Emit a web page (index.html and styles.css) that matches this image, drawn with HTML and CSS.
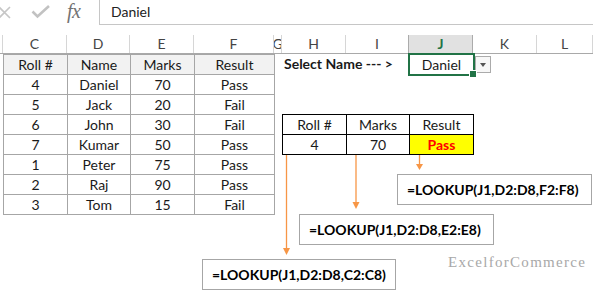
FILE: index.html
```html
<!DOCTYPE html>
<html>
<head>
<meta charset="utf-8">
<link rel="stylesheet" href="styles.css">
</head>
<body>
<div class="app">
  <div class="formula-bar">
    <div class="fb-icons">
      <svg class="ic-x" width="14" height="14" viewBox="0 0 14 14"><path d="M1 1 L12 12 M12 1 L1 12" stroke="#c6c6c6" stroke-width="1.6" fill="none"/></svg>
      <svg class="ic-check" width="20" height="14" viewBox="0 0 20 14"><path d="M1.5 6.5 L6.5 11.5 L18 1" stroke="#c2c2c2" stroke-width="2.6" fill="none"/></svg>
      <span class="ic-fx">fx</span>
    </div>
    <div class="fb-input">Daniel</div>
  </div>

  <div class="col-headers">
    <div class="ch ch-edge"></div>
    <div class="ch">C</div>
    <div class="ch">D</div>
    <div class="ch">E</div>
    <div class="ch">F</div>
    <div class="ch ch-g">G</div>
    <div class="ch">H</div>
    <div class="ch">I</div>
    <div class="ch ch-sel">J</div>
    <div class="ch ch-after-sel">K</div>
    <div class="ch">L</div>
  </div>

  <div class="sheet">
    <div class="data-table">
      <div class="cell head">Roll #</div><div class="cell head">Name</div><div class="cell head">Marks</div><div class="cell head">Result</div>
      <div class="cell">4</div><div class="cell">Daniel</div><div class="cell">70</div><div class="cell">Pass</div>
      <div class="cell">5</div><div class="cell">Jack</div><div class="cell">20</div><div class="cell">Fail</div>
      <div class="cell">6</div><div class="cell">John</div><div class="cell">30</div><div class="cell">Fail</div>
      <div class="cell">7</div><div class="cell">Kumar</div><div class="cell">50</div><div class="cell">Pass</div>
      <div class="cell">1</div><div class="cell">Peter</div><div class="cell">75</div><div class="cell">Pass</div>
      <div class="cell">2</div><div class="cell">Raj</div><div class="cell">90</div><div class="cell">Pass</div>
      <div class="cell">3</div><div class="cell">Tom</div><div class="cell">15</div><div class="cell">Fail</div>
    </div>

    <div class="select-label">Select Name --- &gt;</div>
    <div class="active-cell">Daniel</div>
    <div class="dropdown"><span class="tri"></span></div>

    <div class="lookup-table">
      <div class="lcell">Roll #</div><div class="lcell">Marks</div><div class="lcell">Result</div>
      <div class="lcell">4</div><div class="lcell">70</div><div class="lcell result">Pass</div>
    </div>

    <svg class="arrows" width="593" height="238" viewBox="0 0 593 238">
      <g stroke="#f79646" stroke-width="1.3" fill="none">
        <line x1="286.5" y1="101" x2="286.5" y2="196"/>
        <line x1="356" y1="101" x2="356" y2="150"/>
        <line x1="419.5" y1="101" x2="419.5" y2="111"/>
      </g>
      <g fill="#f79646">
        <polygon points="283,194 290,194 286.5,201"/>
        <polygon points="352.5,148 359.5,148 356,155"/>
        <polygon points="416,110 423,110 419.5,116"/>
      </g>
    </svg>

    <div class="formula-box fb3">=LOOKUP(J1,D2:D8,F2:F8)</div>
    <div class="formula-box fb2">=LOOKUP(J1,D2:D8,E2:E8)</div>
    <div class="formula-box fb1">=LOOKUP(J1,D2:D8,C2:C8)</div>

    <div class="watermark">ExcelforCommerce</div>
  </div>
</div>
</body>
</html>
```

FILE: styles.css
```css
* { box-sizing: border-box; }
html, body { margin: 0; padding: 0; background: #fff; }
body {
  width: 593px;
  height: 292px;
  overflow: hidden;
  font-family: Lato, "Noto Sans", sans-serif;
  font-size: 14px;
  color: #1a1a1a;
}
.app { width: 593px; }

/* formula bar */
.formula-bar {
  display: flex;
  height: 25px;
}
.fb-icons {
  width: 99px;
  display: flex;
  align-items: center;
  position: relative;
}
.ic-x { margin-left: -2px; margin-top: 0px; }
.ic-check { margin-left: 19px; margin-top: -1px; }
.ic-fx {
  margin-left: 16px;
  font-family: "Liberation Serif", serif;
  font-style: italic;
  font-size: 20px;
  color: #737373;
  letter-spacing: -0.5px;
  margin-top: -2px;
}
.fb-input {
  flex: 1;
  border-left: 1px solid #c6c6c6;
  border-bottom: 1px solid #c6c6c6;
  padding-left: 11px;
  line-height: 24px;
  font-size: 14px;
  color: #222;
}

/* column headers */
.col-headers {
  display: grid;
  grid-template-columns: 3px 64px 63px 64px 80px 8px 64px 63px 64px 64px 56px;
  margin-top: 10px;
  height: 19px;
  border-bottom: 1px solid #a9a9a9;
}
.ch {
  border-right: 1px solid #d6d6d6;
  text-align: center;
  line-height: 18px;
  font-size: 14px;
  color: #444;
  overflow: hidden;
  white-space: nowrap;
}
.ch-edge { border-right-color: #d6d6d6; }
.ch-g { display: flex; justify-content: center; }
.ch-sel {
  background: #e1e1e1;
  color: #217346;
  font-weight: bold;
  border-right-color: #ababab;
}
.ch:nth-child(8) { border-right-color: #ababab; }

/* sheet */
.sheet {
  position: relative;
  display: grid;
  grid-template-columns: 3px 64px 63px 64px 80px 8px 64px 63px 64px 64px 56px;
  grid-template-rows: repeat(8, 20px);
  height: 238px;
  align-content: start;
}
.data-table {
  grid-column: 2 / 6;
  grid-row: 1 / 9;
  width: 272px;
  height: 161px;
  display: grid;
  grid-template-columns: 63px 62px 63px 79px;
  grid-auto-rows: 19px;
  gap: 1px;
  padding: 1px;
  background: #a6a6a6;
}
.cell {
  background: #fff;
  text-align: center;
  line-height: 19px;
}
.cell.head { background: #f2f2f2; }

.select-label {
  grid-column: 7 / 10;
  grid-row: 1;
  padding-left: 2px;
  font-weight: bold;
  line-height: 20px;
  white-space: nowrap;
}
.active-cell {
  grid-column: 9;
  grid-row: 1;
  margin: -1px -2px -2px -1px;
  border: 2px solid #217346;
  text-align: center;
  line-height: 19px;
  position: relative;
}
.active-cell::after {
  content: "";
  position: absolute;
  right: -4px;
  bottom: -4px;
  width: 6px;
  height: 6px;
  background: #217346;
  border: 1px solid #fff;
}
.dropdown {
  grid-column: 10;
  grid-row: 1;
  margin: 2px 0 0 2px;
  width: 16px;
  height: 17px;
  border: 1px solid #ababab;
  background: #f7f7f7;
  display: flex;
  align-items: center;
  justify-content: center;
}
.tri {
  width: 0;
  height: 0;
  border-left: 3.5px solid transparent;
  border-right: 3.5px solid transparent;
  border-top: 4px solid #555;
}

.lookup-table {
  grid-column: 7 / 10;
  grid-row: 4 / 6;
  width: 192px;
  height: 41px;
  display: grid;
  grid-template-columns: 63px 62px 63px;
  grid-auto-rows: 19px;
  gap: 1px;
  padding: 1px;
  background: #000;
}
.lcell {
  background: #fff;
  text-align: center;
  line-height: 19px;
}
.lcell.result {
  background: #ffff00;
  color: #ff0000;
  font-weight: bold;
}

/* overlay drawing */
.arrows {
  position: absolute;
  left: 0;
  top: 0;
  pointer-events: none;
}
.formula-box {
  position: absolute;
  height: 31px;
  border: 1px solid #a6a6a6;
  background: #fff;
  font-weight: bold;
  color: #000;
  font-size: 14px;
  line-height: 29px;
  padding-left: 9px;
  white-space: nowrap;
}
.fb3 { left: 397px; top: 120px; width: 195px; }
.fb2 { left: 299px; top: 160px; width: 195px; }
.fb1 { left: 202px; top: 205px; width: 194px; }

.watermark {
  position: absolute;
  left: 448px;
  top: 200px;
  font-family: "Liberation Serif", serif;
  font-size: 15px;
  line-height: 17px;
  letter-spacing: 1.3px;
  color: #a8a8a8;
  white-space: nowrap;
}
```
